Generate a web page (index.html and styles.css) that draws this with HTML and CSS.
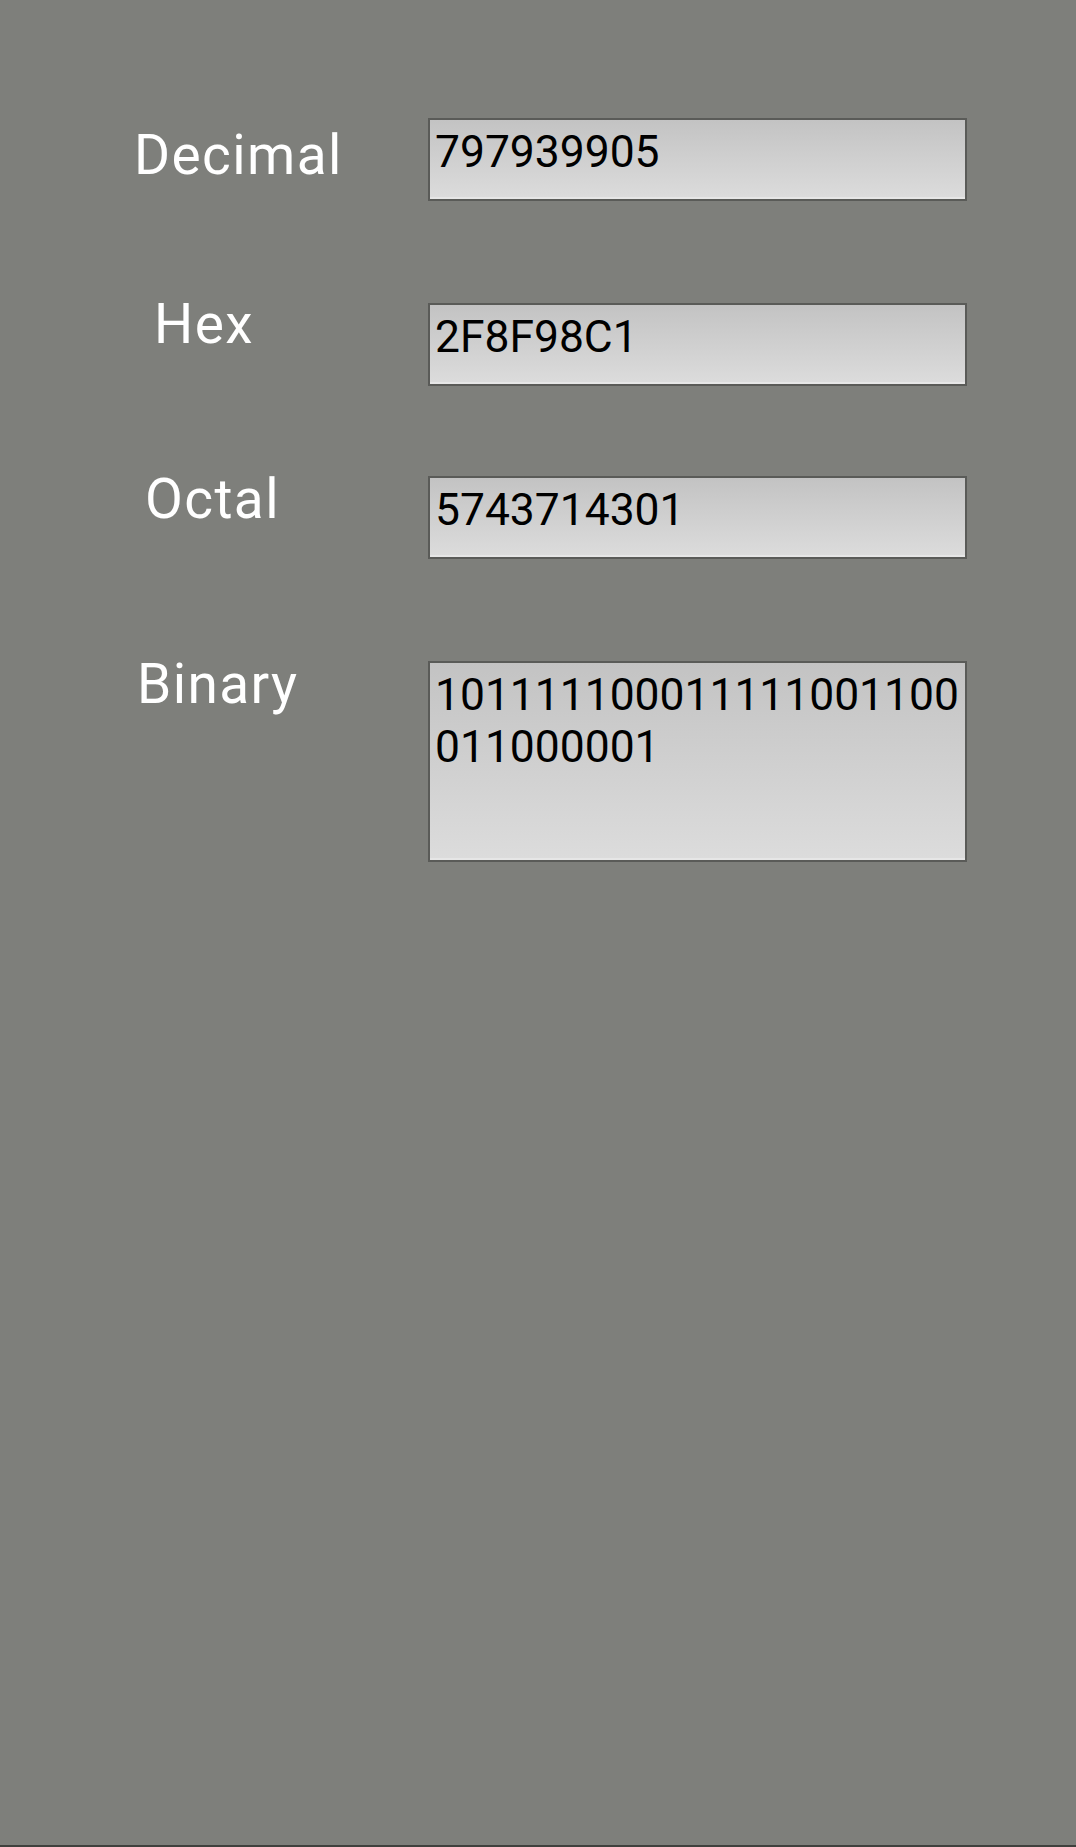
FILE: index.html
```html
<!DOCTYPE html>
<html>
<head>
<meta charset="utf-8">
<link rel="stylesheet" href="styles.css">
</head>
<body>
<main class="screen">
  <div class="row row-decimal">
    <div class="label label-decimal">Decimal</div>
    <div class="field">797939905</div>
  </div>
  <div class="row row-hex">
    <div class="label label-hex">Hex</div>
    <div class="field">2F8F98C1</div>
  </div>
  <div class="row row-octal">
    <div class="label label-octal">Octal</div>
    <div class="field">5743714301</div>
  </div>
  <div class="row row-binary">
    <div class="label label-binary">Binary</div>
    <div class="field field-tall">101111100011111001100011000001</div>
  </div>
</main>
</body>
</html>
```

FILE: styles.css
```css
html, body {
  margin: 0;
  padding: 0;
}
body {
  background: #7e7f7b;
  font-family: Roboto, "Noto Sans", sans-serif;
}
.screen {
  box-sizing: border-box;
  width: 1076px;
  height: 1847px;
  border-bottom: 2px solid #3f403d;
  display: flex;
  flex-direction: column;
}
.row {
  display: flex;
  align-items: flex-start;
}
.row-decimal { margin-top: 118px; }
.row-hex { margin-top: 102px; }
.row-octal { margin-top: 90px; }
.row-binary { margin-top: 102px; }

.label {
  box-sizing: border-box;
  flex: 0 0 428px;
  color: #ffffff;
  font-size: 55px;
  letter-spacing: 1.4px;
  line-height: normal;
  white-space: nowrap;
}
.label-decimal { padding-left: 134px; margin-top: 5px; }
.label-hex { padding-left: 154px; margin-top: -11px; }
.label-octal { padding-left: 145px; margin-top: -9px; }
.label-binary { padding-left: 137px; margin-top: -9px; }

.field {
  box-sizing: border-box;
  width: 539px;
  height: 83px;
  border: 2px solid #5a5b58;
  box-shadow: inset 0 -2px 0 #e6e6e6;
  background: linear-gradient(to bottom, #c3c3c3 0%, #dcdcdc 100%);
  color: #000000;
  font-size: 44.4px;
  line-height: normal;
  padding: 6px 4px 0 5px;
  word-break: break-all;
}
.field-tall {
  height: 201px;
}
```
